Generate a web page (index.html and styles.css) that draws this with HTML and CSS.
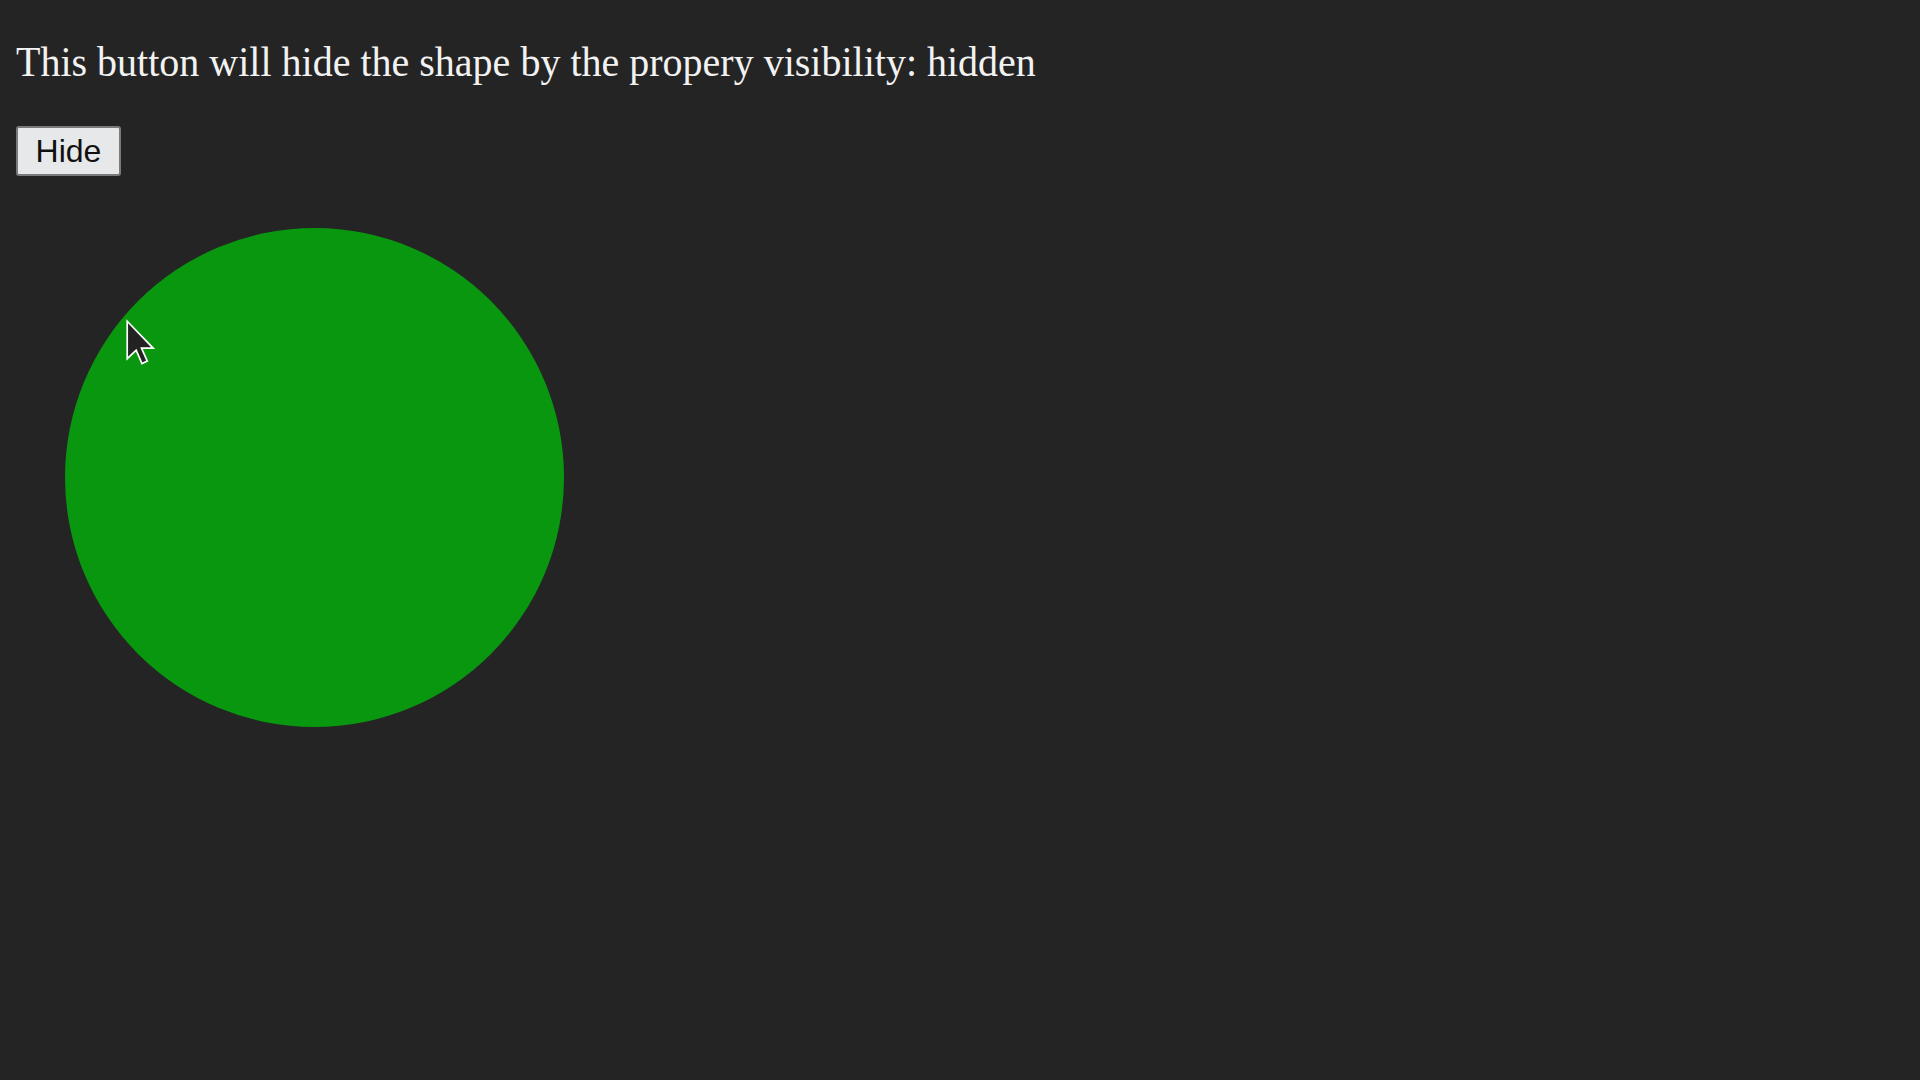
FILE: index.html
```html
<!DOCTYPE html>
<html>
<head>
<meta charset="utf-8">
<link rel="stylesheet" href="styles.css">
</head>
<body>
<p class="intro">This button will hide the shape by the propery visibility: hidden</p>
<button class="hide-btn">Hide</button>
<div class="stage">
  <div class="shape"></div>
</div>
<svg class="cursor" width="29" height="48" viewBox="0 0 12 19" xmlns="http://www.w3.org/2000/svg">
  <path d="M0.5,0.5 L0.5,16 L4.2,12.5 L6.6,18 L8.8,17 L6.4,11.6 L11.2,11.6 Z" fill="#222" stroke="#fff" stroke-width="0.7" stroke-linejoin="miter"/>
</svg>
</body>
</html>
```
FILE: styles.css
```css
html, body {
  margin: 0;
  padding: 0;
  background: #242424;
  height: 100%;
}
body {
  padding: 16px;
  box-sizing: border-box;
  position: relative;
}
.intro {
  margin: 0;
  padding-top: 25px;
  font-family: "Liberation Serif", "Times New Roman", serif;
  font-size: 40px;
  line-height: 46px;
  color: #f2f2f2;
  transform: scaleY(1.06);
  transform-origin: 0 100%;
}
.hide-btn {
  margin-top: 39px;
  display: block;
  width: 105px;
  height: 50px;
  padding: 0;
  font-family: "Liberation Sans", Arial, sans-serif;
  font-size: 32px;
  color: #111;
  background: #e6e8e9;
  border: 2px solid #7a7a7a;
  border-radius: 3px;
}
.stage {
  padding-top: 52px;
  padding-left: 49px;
}
.shape {
  width: 499px;
  height: 499px;
  border-radius: 50%;
  background: #08970f;
}
.cursor {
  position: absolute;
  left: 126px;
  top: 319px;
}
```
